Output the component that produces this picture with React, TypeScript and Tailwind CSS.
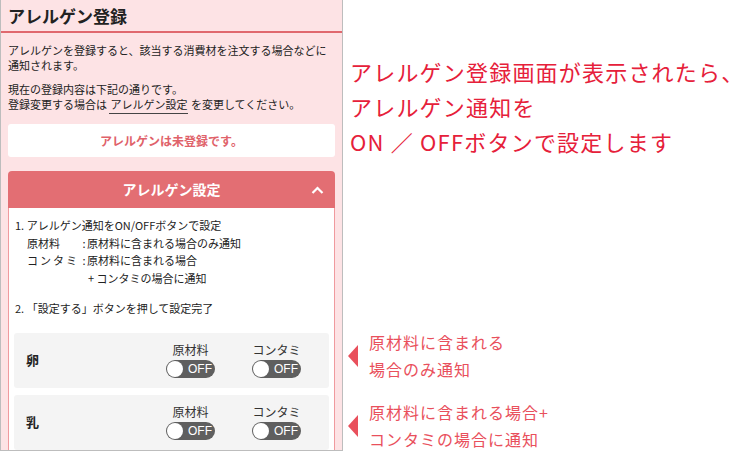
import React from 'react';

const jp = { fontFamily: '"Noto Sans CJK JP", "Noto Sans", sans-serif' };

function Toggle() {
  return (
    <div className="relative flex h-[18px] w-[49px] items-center rounded-full bg-[#5f5f5f]">
      <div className="absolute left-[1px] top-[1px] h-[16px] w-[16px] rounded-full bg-white" />
      <span className="ml-[22px] text-[12px] leading-none text-white" style={{ fontFamily: '"Liberation Sans", sans-serif' }}>OFF</span>
    </div>
  );
}

function AllergenRow({ name }: { name: string }) {
  return (
    <div className="flex h-[55px] items-center rounded-[3px] bg-[#f4f4f4] pl-[12px] pr-[28px]">
      <span className="text-[13px] font-bold text-[#222]">{name}</span>
      <div className="ml-auto flex gap-[37px]">
        {['原材料', 'コンタミ'].map(l => (
          <div key={l} className="flex flex-col items-center">
            <span className="text-[12px] leading-[14px] text-[#333]">{l}</span>
            <div className="mt-[3px]"><Toggle /></div>
          </div>
        ))}
      </div>
    </div>
  );
}

function Note({ lines, className }: { lines: string[]; className?: string }) {
  return (
    <div className={`flex items-center ${className || ''}`}>
      <svg width="10" height="22" viewBox="0 0 10 22" className="shrink-0">
        <polygon points="10,0 10,22 0,11" fill="#e9505c" />
      </svg>
      <div className="ml-[11px] text-[16px] leading-[27px] tracking-[1px] text-[#e9505c]">
        {lines.map(t => <div key={t}>{t}</div>)}
      </div>
    </div>
  );
}

export default function App() {
  return (
    <div className="flex h-[452px] w-[750px] bg-white" style={jp}>
      {/* phone screen */}
      <div className="h-[451px] w-[343px] shrink-0 overflow-hidden border-x border-b border-[#bdbdbd] bg-[#fde3e5] text-[#222]">
        <div className="flex h-[33px] items-center border-b-2 border-[#e0686e] px-[7px] text-[17px] font-bold">
          アレルゲン登録
        </div>
        <div className="px-[7px]">
          <p className="mt-[10px] text-[11px] leading-[15px]">
            アレルゲンを登録すると、該当する消費材を注文する場合などに<br />通知されます。
          </p>
          <p className="mt-[9px] text-[11px] leading-[15px]">
            現在の登録内容は下記の通りです。<br />
            登録変更する場合は <span className="border-b border-[#444] px-[1px] pb-[1px]">アレルゲン設定</span> を変更してください。
          </p>
          <div className="mt-[12px] flex h-[33px] items-center justify-center rounded-[3px] bg-white text-[12px] font-bold text-[#e0626a]">
            アレルゲンは未登録です。
          </div>
          <div className="relative mt-[14px] flex h-[37px] items-center justify-center rounded-t-[4px] bg-[#e36e73]">
            <span className="text-[14px] font-bold text-white">アレルゲン設定</span>
            <svg width="13" height="8" viewBox="0 0 13 8" className="absolute right-[11px] top-[15px]">
              <polyline points="1.5,7 6.5,2 11.5,7" fill="none" stroke="#fff" strokeWidth="2.2" />
            </svg>
          </div>
          <div className="border-x border-[#f09a9e] bg-white px-[5px] pb-[20px] pt-[9px]">
            <div className="pl-[1px] text-[11px] leading-[17.5px]">
              <div>1. アレルゲン通知をON/OFFボタンで設定</div>
              <div className="flex pl-[12px]">
                <span className="w-[54px]">原材料</span>
                <span className="w-[6px] text-center">:</span>
                <span>原材料に含まれる場合のみ通知</span>
              </div>
              <div className="flex pl-[12px]">
                <span className="w-[54px] tracking-[2px]">コンタミ</span>
                <span className="w-[6px] text-center">:</span>
                <span>原材料に含まれる場合</span>
              </div>
              <div className="pl-[73px]">+ コンタミの場合に通知</div>
              <div className="mt-[13px]">2. 「設定する」ボタンを押して設定完了</div>
            </div>
            <div className="mt-[15px] flex flex-col gap-[7px]">
              <AllergenRow name="卵" />
              <AllergenRow name="乳" />
            </div>
          </div>
        </div>
      </div>

      {/* annotations */}
      <div className="flex flex-1 flex-col pl-[5px]">
        <div className="mt-[54px] pl-[2px] text-[22px] font-normal leading-[35px] tracking-[1.2px] text-[#e6203a]">
          <div>アレルゲン登録画面が表示されたら、</div>
          <div>アレルゲン通知を</div>
          <div>ON ／ OFFボタンで設定します</div>
        </div>
        <Note className="mt-[170px]" lines={['原材料に含まれる', '場合のみ通知']} />
        <Note className="mt-[16px]" lines={['原材料に含まれる場合+', 'コンタミの場合に通知']} />
      </div>
    </div>
  );
}
